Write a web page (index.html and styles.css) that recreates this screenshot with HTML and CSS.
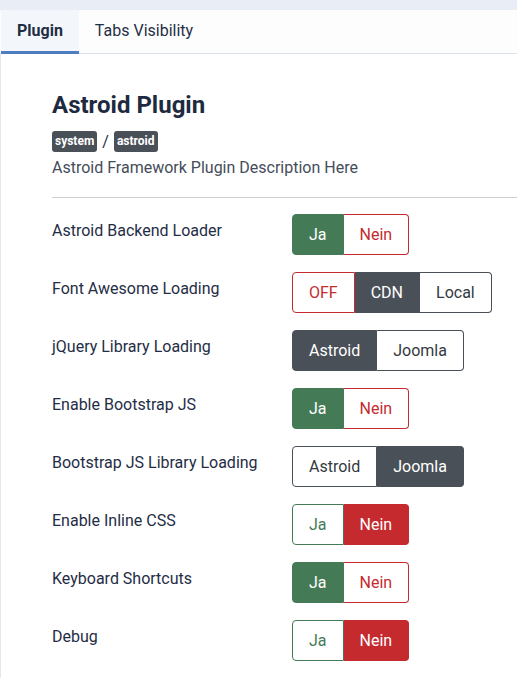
FILE: index.html
```html
<!DOCTYPE html>
<html lang="de">
<head>
<meta charset="utf-8">
<link rel="stylesheet" href="styles.css">
</head>
<body>
<div class="topband"></div>
<div class="tabs">
  <div class="tab active">Plugin</div>
  <div class="tab">Tabs Visibility</div>
</div>
<div class="panel">
  <h1 class="title">Astroid Plugin</h1>
  <div class="badges"><span class="badge">system</span><span class="slash">/</span><span class="badge">astroid</span></div>
  <p class="desc">Astroid Framework Plugin Description Here</p>
  <hr class="divider">
  <div class="rows">
    <div class="row"><div class="label">Astroid Backend Loader</div>
      <div class="group"><span class="btn on-green">Ja</span><span class="btn off-red">Nein</span></div></div>
    <div class="row"><div class="label">Font Awesome Loading</div>
      <div class="group"><span class="btn off-red">OFF</span><span class="btn on-dark">CDN</span><span class="btn off-dark">Local</span></div></div>
    <div class="row"><div class="label">jQuery Library Loading</div>
      <div class="group"><span class="btn on-dark">Astroid</span><span class="btn off-dark">Joomla</span></div></div>
    <div class="row"><div class="label">Enable Bootstrap JS</div>
      <div class="group"><span class="btn on-green">Ja</span><span class="btn off-red">Nein</span></div></div>
    <div class="row"><div class="label">Bootstrap JS Library Loading</div>
      <div class="group"><span class="btn off-dark">Astroid</span><span class="btn on-dark">Joomla</span></div></div>
    <div class="row"><div class="label">Enable Inline CSS</div>
      <div class="group"><span class="btn off-green">Ja</span><span class="btn on-red">Nein</span></div></div>
    <div class="row"><div class="label">Keyboard Shortcuts</div>
      <div class="group"><span class="btn on-green">Ja</span><span class="btn off-red">Nein</span></div></div>
    <div class="row"><div class="label">Debug</div>
      <div class="group"><span class="btn off-green">Ja</span><span class="btn on-red">Nein</span></div></div>
  </div>
</div>
</body>
</html>
```
FILE: styles.css
```css
* { box-sizing: border-box; }
html, body { margin: 0; padding: 0; background: #fff; }
body {
  font-family: Roboto, "Liberation Sans", sans-serif;
  color: #1f2d45;
  width: 517px;
  overflow: hidden;
}
.topband { height: 10px; background: #e9eef6; }
.tabs {
  display: flex;
  height: 44px;
  background: #fdfdfe;
  border-bottom: 1px solid #dbe2ec;
}
.tab {
  display: flex;
  align-items: center;
  padding: 0 16px;
  font-size: 16px;
  color: #1f2d45;
  border-bottom: 3px solid transparent;
  margin-bottom: -1px;
}
.tab.active {
  font-weight: 700;
  background: #f3f6fa;
  border-bottom-color: #4f7ec0;
  padding: 0 16px;
  margin-left: 1px;
}
.panel {
  border-left: 1px solid #e3e8f0;
  padding: 36px 0 20px 51px;
  min-height: 640px;
}
.title {
  margin: 0;
  font-size: 24px;
  line-height: 30px;
  font-weight: 700;
  color: #1e2a40;
}
.badges {
  display: flex;
  align-items: center;
  margin-top: 11px;
  height: 21px;
}
.badge {
  background: #495057;
  color: #fff;
  font-size: 12px;
  font-weight: 700;
  padding: 0 3px;
  height: 21px;
  line-height: 21px;
  border-radius: 3px;
}
.slash { margin: 0 5px; font-size: 16px; color: #1f2d45; }
.desc {
  margin: 4px 0 0;
  font-size: 16px;
  line-height: 24px;
  color: #454c5a;
}
.divider {
  margin: 17px 0 0;
  border: 0;
  border-top: 1px solid #cfcfcf;
}
.rows {
  display: flex;
  flex-direction: column;
  gap: 17px;
  padding-top: 16px;
}
.row { display: flex; align-items: flex-start; }
.label {
  width: 240px;
  font-size: 16px;
  line-height: 24px;
  padding-top: 5px;
  color: #1f2d45;
}
.group { display: flex; }
.btn {
  height: 41px;
  line-height: 39px;
  padding: 0 16px;
  font-size: 16px;
  border: 1px solid;
}
.group .btn:first-child { border-radius: 4px 0 0 4px; }
.group .btn:last-child { border-radius: 0 4px 4px 0; }
.group .btn + .btn { border-left-width: 0; }
.on-green { background: #457a56; border-color: #457a56; color: #fff; }
.off-green { background: #fff; border-color: #457a56; color: #457a56; }
.on-red { background: #c52a2f; border-color: #c52a2f; color: #fff; }
.off-red { background: #fff; border-color: #c52a2f; color: #c52a2f; }
.on-dark { background: #495057; border-color: #495057; color: #fff; }
.off-dark { background: #fff; border-color: #495057; color: #343a40; }
```
